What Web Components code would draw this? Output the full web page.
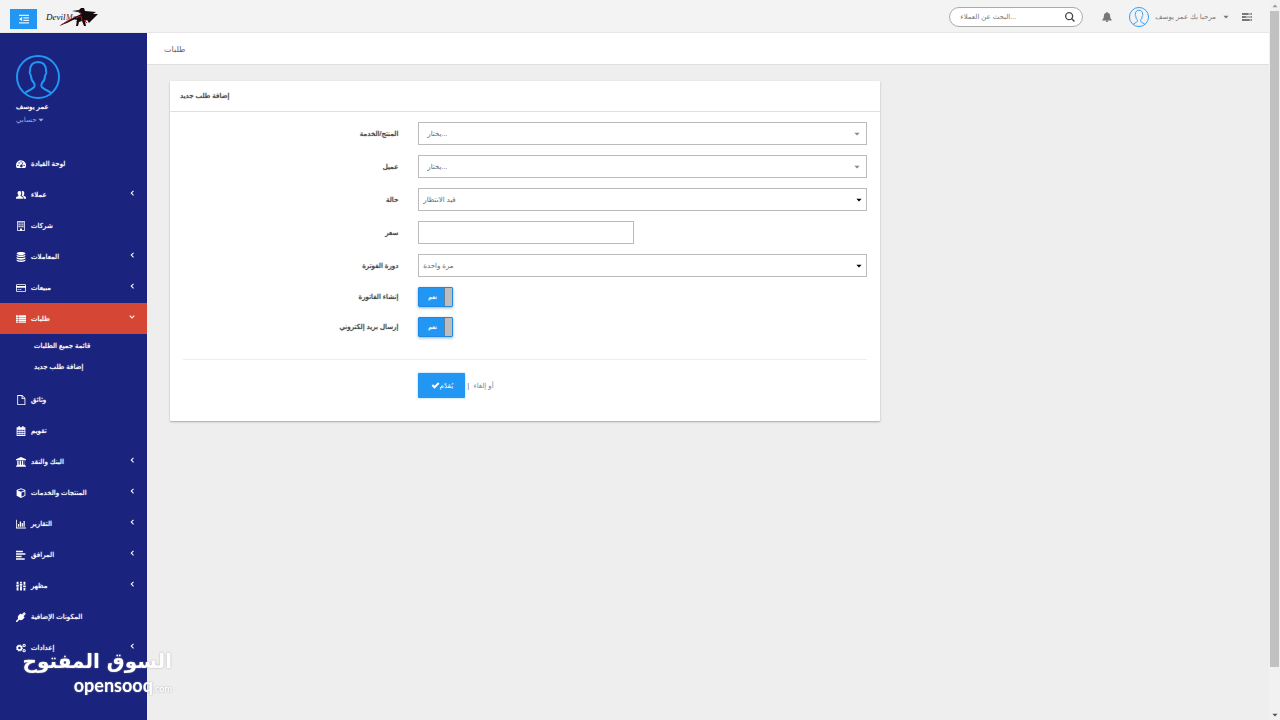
<!DOCTYPE html>
<html lang="ar" dir="ltr">
<head>
<meta charset="utf-8">
<meta name="viewport" content="width=device-width, initial-scale=1">
<title>طلبات</title>
<style>
  :root {
    --blue: #2196f3;
    --navy: #1a237e;
    --red: #d64635;
    --text: #555;
    --fs-s: 7px;
    --fs-m: 8px;
    --fs-l: 9px;
    --strong: 0 0 1px currentColor;
  }
  body {
    margin: 0;
    background: #eee;
    color: var(--text);
    font: 7px/12px "Liberation Sans", "DejaVu Sans", sans-serif;
  }
</style>
</head>
<body>
<app-shell>
  <top-bar slot="header"></top-bar>
  <side-bar slot="sidebar"></side-bar>
  <page-title slot="main">طلبات</page-title>
  <page-content slot="main">
    <form-panel heading="إضافة طلب جديد">
      <form-row label="المنتج/الخدمة" kind="picker" value="يختار..."></form-row>
      <form-row label="عميل" kind="picker" value="يختار..."></form-row>
      <form-row label="حالة" kind="select" value="قيد الانتظار"></form-row>
      <form-row label="سعر" kind="text"></form-row>
      <form-row label="دورة الفوترة" kind="select" value="مرة واحدة"></form-row>
      <form-row label="إنشاء الفاتورة" kind="toggle" value="نعم"></form-row>
      <form-row label="إرسال بريد إلكتروني" kind="toggle" value="نعم"></form-row>
      <form-actions slot="actions"></form-actions>
    </form-panel>
  </page-content>
  <scroll-rail slot="rail"></scroll-rail>
</app-shell>
<market-mark></market-mark>

<script>
const define = (name, html, setup) => {
  const tpl = document.createElement('template');
  customElements.define(name, class extends HTMLElement {
    constructor() {
      super();
      this.attachShadow({ mode: 'open' });
    }
    connectedCallback() {
      if (this.shadowRoot.childNodes.length) return;
      tpl.innerHTML = typeof html === 'function' ? html(this) : html;
      this.shadowRoot.append(tpl.content.cloneNode(true));
      if (setup) setup(this);
    }
  });
};

const ICONS = {
  dashboard: '<path fill-rule="evenodd" d="M8 2a8 8 0 0 0-8 8c0 1.600.5 3 1.200 4.200h13.600A8 8 0 0 0 8 2zM2 10.200a1.100 1.100 0 1 1 2.200 0 1.100 1.100 0 0 1-2.200 0zm1.700-4a1.100 1.100 0 1 1 2.200 0 1.100 1.100 0 0 1-2.200 0zM7 4.500a1.100 1.100 0 1 1 2.200 0 1.100 1.100 0 0 1-2.200 0zm4.800 5.700a1.100 1.100 0 1 1 2.200 0 1.100 1.100 0 0 1-2.200 0zM10.700 5l1 .4-1.900 4.300a2 2 0 1 1-1.200-.4z"/>',
  users: '<path d="M5.500 1.500c2 0 3 1.500 3 3.300 0 1.500-.6 2.700-1.300 3.400v1.200l3.300 1.600c.5.300.5 1 .5 3H0c0-2 0-2.700.5-3l3.300-1.600V8.200C3 7.500 2.500 6.300 2.500 4.800c0-1.800 1-3.300 3-3.300zM9 2c2.500-.8 4.300.6 4.300 3 0 1.400-.5 2.500-1.200 3.200v1l3.400 1.700c.5.300.5 1 .5 3.100h-3.800c0-2.800-.1-3.200-.8-3.700L9 9c1.400-2 1.400-5 0-7z"/>',
  building: '<path fill-rule="evenodd" d="M2 0h12v16H2zm1.300 1.200v13.600h3V12h3.400v2.800h3V1.200z"/><path d="M4 2h2v2H4zm3 0h2v2H7zm3 0h2v2h-2zM4 5h2v2H4zm3 0h2v2H7zm3 0h2v2h-2zM4 8h2v2H4zm3 0h2v2H7zm3 0h2v2h-2z"/>',
  database: '<path d="M8 0c4 0 7 1 7 2.300S12 4.700 8 4.700 1 3.600 1 2.300 4 0 8 0zM1 4.200c1.600 1.200 4 1.600 7 1.600s5.400-.4 7-1.600V6c0 1.300-3 2.300-7 2.300S1 7.300 1 6zm0 3.900c1.600 1.200 4 1.600 7 1.600s5.400-.4 7-1.600v1.800c0 1.300-3 2.300-7 2.300s-7-1-7-2.300zM1 12c1.600 1.200 4 1.600 7 1.600s5.400-.4 7-1.600v1.700C15 15 12 16 8 16s-7-1-7-2.300z"/>',
  card: '<path fill-rule="evenodd" d="M1 2h14l1 1v10l-1 1H1l-1-1V3zm.3 1.300v1.500h13.400V3.300zm0 4.200v5.200h13.400V7.500zM2.500 10h2v1.200h-2zm3 0h3v1.200h-3z"/>',
  orders: '<path d="M0 2h3v2.600H0zm4 0h12v2.600H4zM0 5.400h3V8H0zm4 0h12V8H4zM0 8.800h3v2.600H0zm4 0h12v2.600H4zM0 12.200h3V14H0zm4 0h12V14H4z"/>',
  file: '<path fill-rule="evenodd" d="M2 0h8l5 5v11H2zm1.400 1.400v13.200h10.200V6.200H9V1.400zm7 .4V5h3z"/>',
  calendar: '<path fill-rule="evenodd" d="M4 0h2v2h4V0h2v2h3v14H1V2h3zM2.500 6v2h2V6zm3 0v2h2V6zm3 0v2h2V6zm3 0v2h2V6zm-9 3.200v2h2v-2zm3 0v2h2v-2zm3 0v2h2v-2zm3 0v2h2v-2zm-9 3.200v2h2v-2zm3 0v2h2v-2zm3 0v2h2v-2zm3 0v2h2v-2z"/>',
  bank: '<path d="M8 0l8 3.600V5H0V3.600zM2 6h2.200v6.500h1.600V6H8v6.500h1.400V6h2.200v6.500H14V6h.5v6.500l.5.700v1H1v-1l1-.7zM0 14.700h16V16H0z"/>',
  cube: '<path fill-rule="evenodd" d="M8 .5l7 2.600v9.400l-7 3.300-7-3.300V3.100zm0 1.400L2.600 3.900 8 5.900l5.400-2zm.8 5.400v6.500l4.800-2.300V5.500z"/>',
  chart: '<path d="M0 1h1.300v12.700H16V15H0zm3 7h2v4.500H3zm3-4h2v8.500H6zm3 2.500h2v6H9zM12 3h2v9.500h-2z"/>',
  align: '<path d="M0 1h11v2.400H0zm0 4h15v2.400H0zm0 4h9v2.400H0zm0 4h14v2.400H0z"/>',
  sliders: '<path d="M1 1h3v4H1zm5.500 0h3v2.500h-3zM12 1h3v5h-3zM.5 6h4v3h-4zM6 4.500h4v3H6zM11.500 7h4v3h-4zM1 10h3v5H1zm5.500-1.500h3V15h-3zM12 11h3v4h-3z"/>',
  plug: '<path d="M15.500 3.200l-3.400 3.400 1.700 1.700c-2.600 4.400-5.600 5.600-8.600 4.200L1.800 16H0v-1.800l3.400-3.400C2 7.800 3.200 4.800 7.600 2.200l1.700 1.700L12.800.5c1.300-.6 2 .5 1.200 1.400L10.900 5l.3.300L14.400 2c1-.6 1.700.4 1.100 1.200z"/>',
  cogs: '<g fill="none" stroke="currentColor"><circle cx="5.500" cy="8" r="3.400" stroke-width="2.800"/><circle cx="5.500" cy="8" r="5" stroke-width="1.200" stroke-dasharray="2 1.900"/><circle cx="13" cy="3.800" r="1.800" stroke-width="1.700"/><circle cx="13" cy="12.200" r="1.800" stroke-width="1.700"/></g>',
  outdent: '<path d="M0 1h16v2H0zm7 4h9v2H7zm0 4h9v2H7zM0 13h16v2H0zM5 4.500v7L0 8z"/>',
  search: '<path fill-rule="evenodd" d="M6.600 0a6.600 6.600 0 0 1 5.300 10.500l4 4-1.500 1.500-4-4A6.600 6.600 0 1 1 6.600 0zm0 2.100a4.500 4.500 0 1 0 0 9 4.500 4.500 0 0 0 0-9z"/>',
  bell: '<path d="M8 0c.8 0 1.200.5 1.200 1.200 2.300.5 3.800 2.500 3.800 4.900 0 3.300.8 5 2.500 6.400v.9H.5v-.9C2.200 11.100 3 9.400 3 6.100c0-2.400 1.500-4.400 3.800-4.900C6.800.5 7.200 0 8 0zM6 14h4c0 1.200-.9 2-2 2s-2-.8-2-2z"/>',
  tasks: '<path fill-rule="evenodd" d="M0 1.500h16v3.400H0zm10 1v1.400h5V2.500zM0 6.300h16v3.400H0zm6 1v1.400h9V7.300zM0 11.100h16v3.400H0zm12 1v1.400h3v-1.400z"/>',
  check: '<path d="M1 8.300l2.500-2.500L6.300 8.600l6.200-6.200L15 4.900l-8.700 8.700z"/>',
  caret: '<path d="M1 4.500h14L8 12z"/>',
  left: '<path d="M11 1l2 2-5 5 5 5-2 2-7-7z"/>',
  down: '<path d="M1 5.500l2-2 5 5 5-5 2 2-7 7z"/>'
};

define('ui-icon', el => `
  <style>
    :host { display: inline-flex; flex: none; width: var(--icon, 9px); height: var(--icon, 9px); }
    svg { width: 100%; height: 100%; fill: currentColor; }
  </style>
  <svg viewBox="0 0 16 16" aria-hidden="true">${ICONS[el.getAttribute('name')]}</svg>`);

define('user-avatar', `
  <style>
    :host { display: block; flex: none; width: var(--avatar, 20px); height: var(--avatar, 20px); color: var(--blue); }
    svg { display: block; width: 100%; height: 100%; fill: none; stroke: currentColor; stroke-width: var(--avatar-line, 2); }
  </style>
  <svg viewBox="0 0 44 44" aria-hidden="true">
    <circle cx="22" cy="22" r="21"/>
    <path d="M9 38c2-2 6-3 8-5 2-1 2-3 1-5-2-2-3-4-3-7-1-2-2-4-1-5 0-6 3-9 8-9s8 3 8 9c1 1 0 3-1 5 0 3-1 5-3 7-1 2-1 4 1 5 2 2 6 3 8 5"/>
  </svg>`);

define('app-shell', `
  <style>
    :host { display: grid; grid-template: auto 1fr / 147px minmax(0, 1fr) 11px; min-height: 100vh; }
    .head { grid-column: 1 / 3; }
    .rail { grid-column: 3; grid-row: 1 / 3; display: grid; }
    .side { display: grid; grid-row: 2; }
    main { grid-row: 2; min-width: 0; }
  </style>
  <header class="head"><slot name="header"></slot></header>
  <aside class="side"><slot name="sidebar"></slot></aside>
  <main><slot name="main"></slot></main>
  <div class="rail"><slot name="rail"></slot></div>`);

define('brand-logo', `
  <style>
    :host { display: block; width: 52px; height: 22px; }
    svg { display: block; width: 100%; height: 100%; overflow: visible; }
    text { font: italic 9px "Liberation Serif", serif; fill: #160b10; }
    .may { font-size: 8px; fill: #7a1522; }
  </style>
  <svg viewBox="0 0 52 22" role="img" aria-label="Devil May Cry">
    <text x="0" y="14">Devil</text>
    <text class="may" x="20" y="14">May</text>
    <path d="M13 20l8-5 8-4 6-3-3-2-6-1 7-1 2-2 3 0 1 3 11 1-3 2 5 0-5 5-4 4-2-3-2 1 1 5-2 0-2-5-3 1-1 4-2 0 1-6-2-1-8 4z" fill="#150a0e"/>
    <path d="M30 12l5-2 1 5m-4-10l4 3m2 6l3 3M15 19l10-6" fill="none" stroke="#a3202f"/>
  </svg>`);

define('top-bar', `
  <style>
    :host { display: flex; align-items: center; box-sizing: border-box; height: 33px; padding: 1px 17px 0 10px; background: #f3f3f4; border-bottom: 1px solid #e7e7e9; }
    button { display: inline-flex; align-items: center; justify-content: center; border: 0; padding: 0; background: none; color: #777; font: inherit; cursor: pointer; }
    .menu { width: 27px; height: 20px; margin: 4px 9px 0 0; background: var(--blue); color: #e3f2fd; }
    .search { display: flex; align-items: center; margin-left: auto; box-sizing: border-box; width: 134px; height: 20px; padding: 0 7px 0 10px; border: 1px solid #aaa; border-radius: 10px; background: #fff; }
    .search button { color: #444; }
    input { flex: 1; min-width: 0; border: 0; padding: 0; outline: 0; background: none; font: inherit; font-size: var(--fs-s); color: #777; }
    input::placeholder { color: #777; opacity: 1; }
    .bell { margin: 0 17px 0 19px; }
    .user { gap: 7px; margin: 0 13px 0 6px; font-size: var(--fs-s); }
    .user ui-icon { --icon: 6px; }
    ui-icon { --icon: 10px; }
  </style>
  <button class="menu" aria-label="القائمة"><ui-icon name="outdent"></ui-icon></button>
  <brand-logo></brand-logo>
  <form class="search">
    <input type="text" placeholder="البحث عن العملاء..." aria-label="البحث عن العملاء">
    <button type="button" aria-label="بحث"><ui-icon name="search"></ui-icon></button>
  </form>
  <button class="bell" aria-label="إشعارات"><ui-icon name="bell"></ui-icon></button>
  <user-avatar></user-avatar>
  <button class="user"><span>مرحبا بك عمر يوسف</span><ui-icon name="caret"></ui-icon></button>
  <button aria-label="المهام"><ui-icon name="tasks"></ui-icon></button>`);

define('nav-item', el => `
  <style>
    :host { display: block; }
    a { display: flex; align-items: center; gap: 5px; height: 31px; padding: 0 12px 0 16px; color: #fff; text-decoration: none; text-shadow: var(--strong); font-size: var(--fs-s); }
    a ui-icon { --icon: 10px; }
    a .arrow { --icon: 6px; margin: 0 0 3px auto; }
    :host([active]) a { background: var(--red); }
    .sub { padding: 1px 0 7px; }
  </style>
  <a href="#"><ui-icon name="${el.getAttribute('icon')}"></ui-icon><span>${el.getAttribute('label')}</span>
    ${el.hasAttribute('expands') ? `<ui-icon class="arrow" name="${el.hasAttribute('active') ? 'down' : 'left'}"></ui-icon>` : ''}</a>
  ${el.hasAttribute('active') ? '<div class="sub"><slot></slot></div>' : ''}`);

define('nav-subitem', `
  <style>
    :host { display: block; }
    a { display: block; padding-left: 34px; line-height: 21px; color: #fff; text-decoration: none; text-shadow: var(--strong); font-size: var(--fs-s); }
  </style>
  <a href="#"><slot></slot></a>`);

define('side-bar', `
  <style>
    :host { display: block; background: var(--navy); color: #fff; }
    .profile { box-sizing: border-box; height: 115px; padding: 22px 16px 0; }
    user-avatar { --avatar: 44px; --avatar-line: 2; }
    .name { margin-top: 1px; text-shadow: var(--strong); font-size: var(--fs-s); line-height: 13px; }
    .account { display: flex; align-items: center; gap: 1px; border: 0; padding: 0; background: none; color: #9fa8da; font: inherit; font-size: var(--fs-s); line-height: 13px; }
    .account ui-icon { --icon: 6px; }
  </style>
  <div class="profile">
    <user-avatar></user-avatar>
    <div class="name">عمر يوسف</div>
    <button class="account"><span>حسابي</span><ui-icon name="caret"></ui-icon></button>
  </div>
  <nav>
    <nav-item icon="dashboard" label="لوحة القيادة"></nav-item>
    <nav-item icon="users" label="عملاء" expands></nav-item>
    <nav-item icon="building" label="شركات"></nav-item>
    <nav-item icon="database" label="المعاملات" expands></nav-item>
    <nav-item icon="card" label="مبيعات" expands></nav-item>
    <nav-item icon="orders" label="طلبات" expands active>
      <nav-subitem>قائمة جميع الطلبات</nav-subitem>
      <nav-subitem>إضافة طلب جديد</nav-subitem>
    </nav-item>
    <nav-item icon="file" label="وثائق"></nav-item>
    <nav-item icon="calendar" label="تقويم"></nav-item>
    <nav-item icon="bank" label="البنك والنقد" expands></nav-item>
    <nav-item icon="cube" label="المنتجات والخدمات" expands></nav-item>
    <nav-item icon="chart" label="التقارير" expands></nav-item>
    <nav-item icon="align" label="المرافق" expands></nav-item>
    <nav-item icon="sliders" label="مظهر" expands></nav-item>
    <nav-item icon="plug" label="المكونات الإضافية"></nav-item>
    <nav-item icon="cogs" label="إعدادات" expands></nav-item>
  </nav>`);

define('page-title', `
  <style>
    :host { display: block; background: #fff; border-bottom: 1px solid #e0e0e0; }
    h1 { margin: 0; padding: 3px 17px 0; font-size: var(--fs-m); font-weight: normal; line-height: 28px; color: #666; }
  </style>
  <h1><slot></slot></h1>`);

define('page-content', `
  <style>
    :host { display: grid; grid-template-columns: 2fr 1fr; gap: 11px; padding: 16px 23px; }
  </style>
  <slot></slot>`);

define('form-panel', el => `
  <style>
    :host { display: block; background: #fff; box-shadow: 0 1px 2px rgba(0,0,0,.3); border-radius: 1px; }
    h2 { margin: 0; padding: 0 10px; border-bottom: 1px solid #e0e0e0; font-size: var(--fs-s); line-height: 30px; color: #444; font-weight: normal; text-shadow: var(--strong); }
    form { padding: 10px 13px 23px; }
    .rows { display: grid; gap: 10px; }
    hr { margin: 22px 0 13px; border: 0; border-top: 1px solid #eee; }
  </style>
  <h2>${el.getAttribute('heading')}</h2>
  <form>
    <div class="rows"><slot></slot></div>
    <hr>
    <slot name="actions"></slot>
  </form>`);

const field = (kind, value) => {
  if (kind === 'text') return '<input class="box price" id="f" type="text">';
  if (kind === 'toggle') return `<span class="toggle"><input id="f" type="checkbox" checked><span>${value}</span></span>`;
  return `<span class="drop ${kind}"><select class="box" id="f"><option>${value}</option></select><ui-icon name="caret"></ui-icon></span>`;
};

define('form-row', el => `
  <style>
    :host { display: grid; grid-template-columns: 12fr 25fr; column-gap: 20px; align-items: center; }
    label { text-align: right; text-shadow: var(--strong); font-size: var(--fs-s); color: #444; }
    .box { box-sizing: border-box; width: 100%; height: 23px; margin: 0; border: 1px solid #bbb; border-radius: 0; padding: 0 4px; background: #fff; color: #666; font: inherit; font-size: var(--fs-s); appearance: none; }
    .picker .box { padding-left: 8px; }
    .price { width: 48%; }
    .drop { display: grid; align-items: center; }
    .drop > * { grid-area: 1 / 1; }
    .drop ui-icon { --icon: 6px; justify-self: end; margin-right: 5px; color: #000; pointer-events: none; }
    .picker ui-icon { margin-right: 7px; color: #888; }
    .toggle { display: grid; width: 35px; height: 20px; align-items: center; color: #fff; font-size: 6px; text-shadow: var(--strong); box-shadow: 0 1px 3px rgba(33,100,180,.5); border-radius: 1px; }
    .toggle > * { grid-area: 1 / 1; }
    .toggle span { padding-left: 10px; pointer-events: none; z-index: 1; }
    .toggle input { appearance: none; width: 100%; height: 100%; margin: 0; box-sizing: border-box; border: 1px solid #1e88e5; border-radius: 1px; background: linear-gradient(to left, #bdbdbd 7px, #5f7f9d 7px, #5f7f9d 8px, var(--blue) 8px); }
  </style>
  <label for="f">${el.getAttribute('label')}</label>
  <div>${field(el.getAttribute('kind'), el.getAttribute('value'))}</div>`);

define('form-actions', `
  <style>
    :host { display: grid; grid-template-columns: 12fr 25fr; column-gap: 20px; }
    .line { grid-column: 2; display: flex; align-items: center; gap: 2px; font-size: var(--fs-m); color: #777; }
    button { display: inline-flex; align-items: center; justify-content: center; width: 47px; height: 25px; border: 0; border-radius: 1px; padding: 0; background: var(--blue); color: #fff; font: inherit; font-size: var(--fs-s); box-shadow: 0 0 2px rgba(33,150,243,.6); }
    a { margin-left: 2px; color: #6a87a5; text-decoration: none; font-size: var(--fs-s); }
  </style>
  <div class="line"><button type="button"><ui-icon name="check"></ui-icon><span>يُقدّم</span></button><span>|</span><a href="#">أو إلغاء</a></div>`);

define('scroll-rail', `
  <style>
    :host { display: flex; flex-direction: column; align-items: center; background: #f1f1f1; color: #555; }
    ui-icon { --icon: 6px; margin: 3px 0 2px; }
    .up { transform: rotate(180deg); color: #999; }
    .track { flex: 1; width: 9px; }
    .thumb { height: 94%; background: #c1c1c1; }
  </style>
  <ui-icon class="up" name="caret"></ui-icon>
  <div class="track"><div class="thumb"></div></div>
  <ui-icon name="caret"></ui-icon>`);

define('market-mark', `
  <style>
    :host { position: fixed; left: 20px; bottom: 22px; display: block; width: 152px; color: #fff; text-align: right; pointer-events: none; text-shadow: 0 0 2px rgba(150,150,150,.8); white-space: nowrap; }
    .ar { font: bold 20px/30px "DejaVu Sans", sans-serif; }
    .en { font: bold 18px/18px Lato, sans-serif; }
    small { font-size: 9px; }
  </style>
  <div class="ar">السوق المفتوح</div>
  <div class="en">opensooq<small>.com</small></div>`);
</script>
</body>
</html>
